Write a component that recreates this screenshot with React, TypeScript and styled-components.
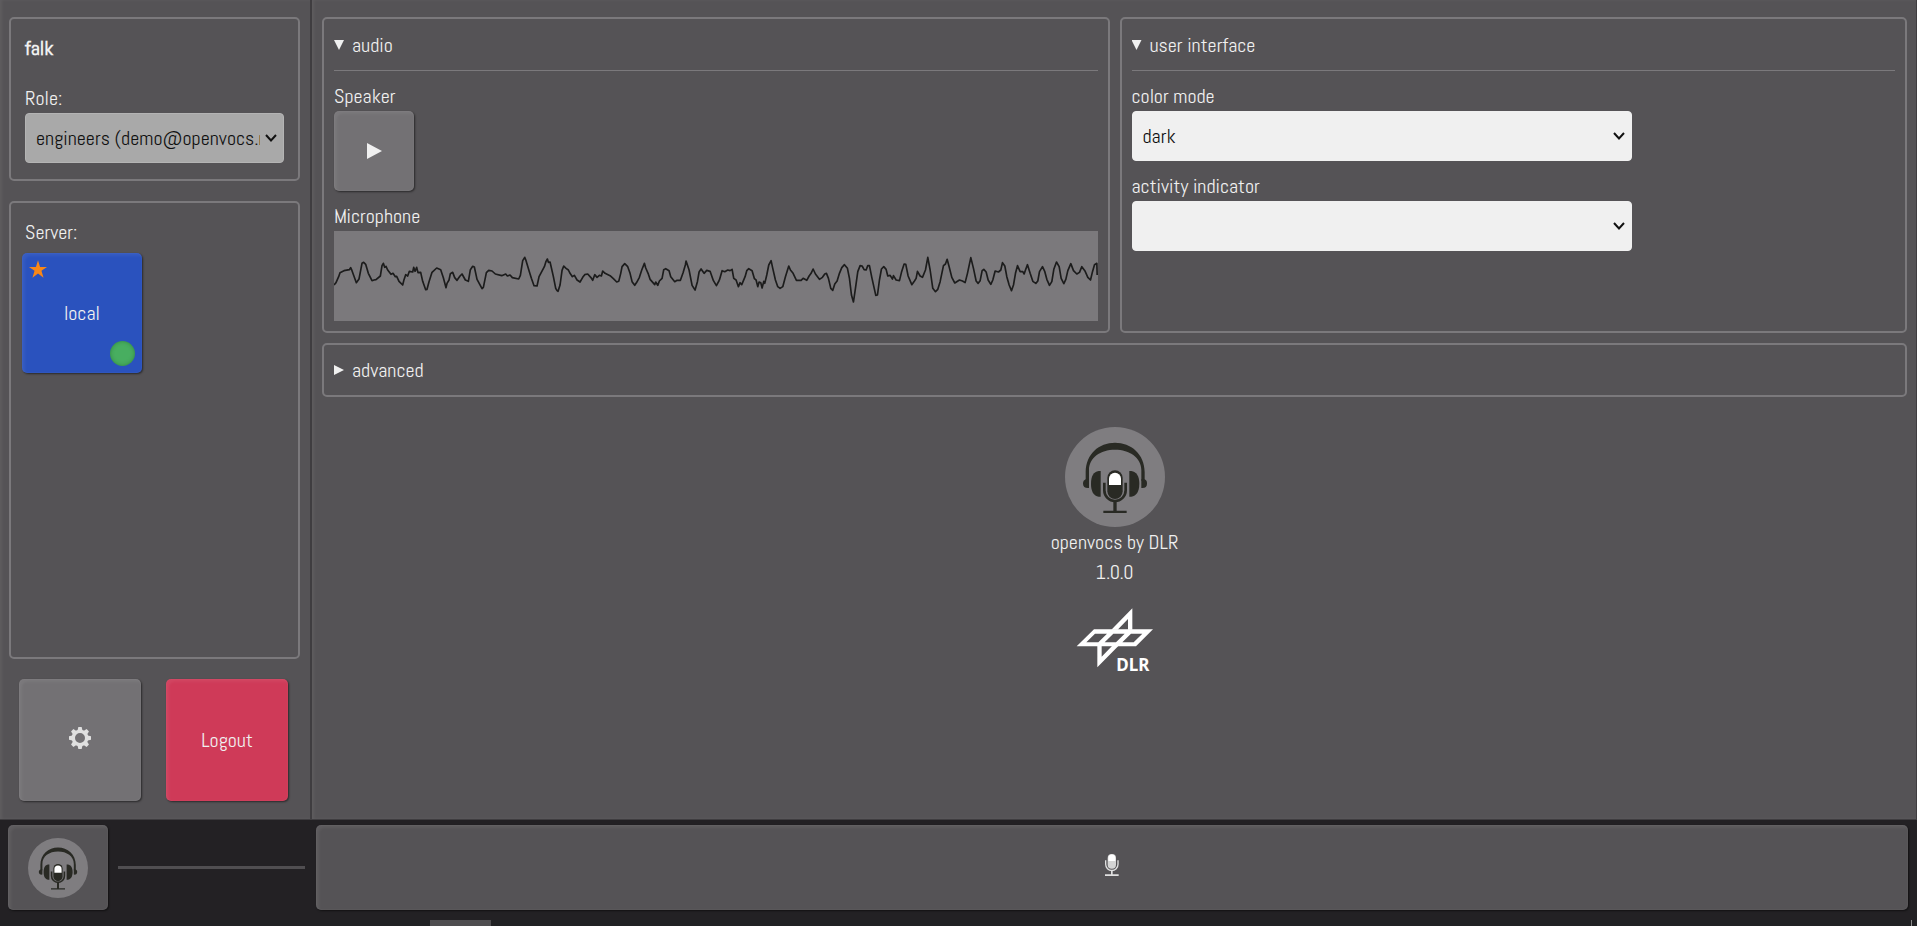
import React, { useState } from "react";
import styled, { createGlobalStyle, css } from "styled-components";

const color = {
  surface: "#555356",
  frame: "#7b797c",
  key: "#737174",
  text: "#f0f0f0",
  edge: "#3f3d40",
  bar: "#232124",
  field: "#f0f0f0",
  ink: "#1c1c1c",
  mark: "#292a24",
};

const GlobalStyle = createGlobalStyle`
  *, *::before, *::after { box-sizing: border-box; }
  body {
    margin: 0;
    background: ${color.bar};
    color: ${color.text};
    font-family: Abel, "Roboto Condensed", "Liberation Sans", sans-serif;
    font-size: 20px;
    line-height: 30px;
  }
  button, select { font: inherit; }
`;

const Page = styled.div`
  min-height: 100vh;
  display: flex;
  flex-direction: column;
`;

const Workspace = styled.div`
  flex: 1;
  display: flex;
  background: ${color.surface};
  border-bottom: 1px solid ${color.edge};
  border-right: 1px solid ${color.edge};
`;

const Sidebar = styled.aside`
  flex: 0 0 312px;
  display: flex;
  flex-direction: column;
  gap: 20px;
  padding: 17px 10px 18px 9px;
  border-right: 2px solid ${color.edge};
  box-shadow: inset 2px 0 3px rgba(255, 255, 255, 0.06);
`;

const framed = css`
  border: 2px solid ${color.frame};
  border-radius: 5px;
`;

const SidePanel = styled.section<{ $grow?: boolean }>`
  ${framed}
  padding: 14px 14px 16px;
  ${(p) => p.$grow && "flex: 1;"}
`;

const UserName = styled.h1`
  margin: 0 0 20px;
  font-size: 20px;
  line-height: 30px;
`;

const Label = styled.label`
  display: block;
`;

const Caption = styled.h2`
  margin: 0;
  font-size: 20px;
  font-weight: 400;
  line-height: 30px;
`;

const chevron =
  "url(\"data:image/svg+xml,%3Csvg xmlns='http://www.w3.org/2000/svg' width='12' height='8'%3E%3Cpath d='M1 1L6 6.5L11 1' fill='none' stroke='%23111' stroke-width='2'/%3E%3C/svg%3E\")";

const Select = styled.select<{ $muted?: boolean }>`
  appearance: none;
  display: block;
  width: 100%;
  height: 50px;
  padding: 0 23px 0 10px;
  border: 1px solid ${(p) => (p.$muted ? "#b4b4b4" : color.field)};
  border-radius: 4px;
  background: ${(p) => (p.$muted ? "#a9a9a9" : color.field)} ${chevron} no-repeat right 6px center;
  color: #111;
`;

const Key = styled.button<{ $size: number; $tone?: string }>`
  position: relative;
  display: flex;
  align-items: center;
  justify-content: center;
  width: ${(p) => p.$size}px;
  height: ${(p) => p.$size}px;
  padding: 0;
  border: 0;
  border-radius: 5px;
  background: ${(p) => p.$tone ?? color.key};
  color: ${color.text};
  box-shadow: inset 3px 3px 3px rgba(255, 255, 255, 0.06),
    inset 0 0 2px rgba(255, 255, 255, 0.1), 1px 1px 2px rgba(0, 0, 0, 0.5);
  cursor: pointer;
`;

const Glyph = styled.svg`
  display: block;
  margin-bottom: 5px;
`;

const ServerList = styled.div`
  margin: 6px -3px 0;
`;

const StarBadge = styled.svg`
  position: absolute;
  top: 7px;
  left: 7px;
`;

const StatusDot = styled.span`
  position: absolute;
  right: 7px;
  bottom: 7px;
  width: 25px;
  height: 25px;
  border-radius: 50%;
  background: #48ae60;
  box-shadow: inset 0 0 4px rgba(0, 60, 0, 0.35);
`;

const SideActions = styled.div`
  display: flex;
  justify-content: space-between;
  padding: 0 12px 0 10px;
`;

const Settings = styled.main`
  flex: 1;
  min-width: 0;
  padding: 17px 9px 17px 10px;
  box-shadow: inset 2px 0 3px rgba(255, 255, 255, 0.06);
`;

const PanelGrid = styled.div`
  display: grid;
  grid-template-columns: 1fr 1fr;
  gap: 10px;
`;

const Panel = styled.details<{ $wide?: boolean }>`
  ${framed}
  padding: 10px;
  ${(p) => p.$wide && "grid-column: 1 / -1;"}
`;

const PanelTitle = styled.summary`
  display: flex;
  align-items: center;
  gap: 8px;
  cursor: pointer;
  list-style: none;
  &::before {
    content: "";
    width: 10px;
    height: 10px;
    background: ${color.text};
    clip-path: polygon(0 0, 100% 50%, 0 100%);
  }
  details[open] > & {
    padding: 1px 0 10px;
    margin-bottom: 10px;
    border-bottom: 1px solid ${color.frame};
  }
  details[open] > &::before {
    clip-path: polygon(0 0, 100% 0, 50% 100%);
  }
`;

const Fields = styled.div`
  display: flex;
  flex-direction: column;
  gap: 10px;
`;

const NarrowFields = styled(Fields)`
  width: 500px;
  max-width: 100%;
`;

const Meter = styled.svg`
  display: block;
  width: 100%;
  height: 90px;
  background: ${color.frame};
`;

const About = styled.section`
  display: flex;
  flex-direction: column;
  align-items: center;
  padding-top: 30px;
`;

const AboutLine = styled.p`
  margin: 0;
`;

const AgencyLink = styled.a`
  display: block;
  height: 68px;
  margin-top: 21px;
`;

const Footer = styled.footer`
  display: flex;
  align-items: center;
  padding: 5px 9px 10px 8px;
`;

const BarKey = styled(Key)<{ $fill?: boolean }>`
  height: 85px;
  background: ${color.surface};
  ${(p) => (p.$fill ? "flex: 1; width: auto;" : "flex: none;")}
`;

const VolumeLine = styled.div`
  width: 187px;
  height: 3px;
  margin: 0 11px 0 10px;
  background: #504e51;
`;

const ScrollStrip = styled.div`
  display: flex;
  height: 6px;
  padding: 0 5px 0 430px;
  justify-content: space-between;
  background: #202123;
`;

const ScrollThumb = styled.div`
  width: 61px;
  background: #4e4d4f;
`;

const ScrollEnd = styled.div`
  width: 1px;
  background: #8a8a8a;
`;

const waveStart =
  "42,195 48,188 56,170 60,158 72,152 88,149 92,143 96,152 109,188 117,177 126,130 131,127 137,133 145,160 156,182 162,180 168,179 181,168 186,137 190,130 194,142 198,139 203,150 213,163 219,160 226,170 230,169 237,184 248,195 252,179 257,164 263,168 268,154 278,156 281,142 285,154 290,142 294,158 302,157 308,184 317,209 321,208 327,185 336,157 350,144 362,149 370,173 378,203 381,190 387,180 391,161 398,157 404,173 411,181 420,168 426,162 436,180 445,184 451,149 458,139 463,141 471,178 486,206 490,202 499,158 506,151 516,153 526,162 545,167 557,162 562,168 570,165 577,173 596,177 601,166 608,122 614,112 618,122 627,152 634,175 642,197 651,198 657,170 665,155 673,140 678,124 682,117 685,127 690,126 700,170 707,205 711,212 714,214 720,195 726,151 731,138 738,145 745,150 750,160 757,170 763,166 771,180 780,186 788,172 794,164 803,162 812,172 818,181 824,164 831,172 838,166 844,168 848,153 855,160 870,167 880,176 890,186 896,184 902,160 906,140 914,131 923,140 930,160 936,185 944,196 950,187 958,172 965,150 973,130 977,144 984,160 990,178 1004,194 1007,186 1013,196 1018,183 1026,175 1031,149 1037,146 1047,152 1052,170 1064,185 1071,181 1081,181 1089,158 1096,134 1098,123 1107,150 1116,196 1125,210 1132,185 1137,156 1143,147 1152,160 1160,151 1170,154 1180,182 1189,197 1198,180";

const waveEnd =
  "58,180 66,152 74,155 83,150 90,152 96,148 101,175 108,180 115,200 120,188 125,194 135,170 140,152 146,146 156,152 163,176 168,180 173,200 177,186 182,188 186,204 191,184 194,190 200,165 206,135 213,122 218,145 226,180 233,200 240,205 248,200 256,170 266,138 271,150 279,160 289,181 303,181 309,175 320,181 327,168 333,160 339,147 346,162 358,178 367,172 374,162 379,160 385,175 392,205 398,211 404,192 411,183 418,160 425,143 433,134 442,145 448,175 454,225 460,246 466,205 473,155 480,137 486,138 492,149 498,150 503,137 508,137 515,172 527,226 532,225 538,180 544,147 551,140 558,148 563,168 570,166 577,177 580,167 588,180 598,182 604,157 612,132 617,133 624,168 635,194 643,183 648,175 652,154 660,168 667,172 676,150 683,112 690,150 698,205 706,215 713,208 720,185 730,137 736,132 741,118 747,140 755,172 764,189 778,180 787,183 795,188 802,160 812,113 820,145 828,183 834,190 840,182 846,152 851,148 858,156 864,180 872,193 878,180 885,153 895,156 902,150 907,128 914,138 920,170 927,195 934,212 940,195 946,160 952,137 960,155 968,155 972,162 976,150 982,134 990,160 998,184 1007,190 1013,183 1018,155 1027,140 1034,155 1040,178 1048,196 1055,185 1061,148 1069,126 1077,140 1083,175 1091,191 1097,178 1103,152 1112,131 1120,152 1130,162 1138,157 1145,140 1155,154 1163,172 1171,180 1177,155 1183,134 1190,130 1191,165";

function Waveform() {
  return (
    <Meter viewBox="0 0 2290 270" preserveAspectRatio="none" role="img" aria-label="Microphone level">
      <g fill="none" stroke={color.ink} strokeWidth={5} strokeLinejoin="round">
        <polyline transform="translate(-42 -33)" points={waveStart} />
        <polyline transform="translate(1098 -33)" points={waveEnd} />
      </g>
    </Meter>
  );
}

function HeadsetLogo({ size }: { size: number }) {
  return (
    <svg width={size} height={size} viewBox="102 51 300 300" aria-hidden="true">
      <circle cx="252" cy="201" r="150" fill="#7f7d80" />
      <g fill={color.mark}>
        <path d="M164 212V186C164 132 204 98 252 98S341 132 341 186V212H331V180C331 143 296 119 252 119S174 143 174 180V212Z" />
        <path d="M164 208H174V234C162 235 156 230 156 221C156 214 159 210 164 208Z" />
        <path d="M341 208H331V234C343 235 348 230 348 221C348 214 346 210 341 208Z" />
        <path d="M209 183V260H203C188 258 180 244 180 221S188 185 203 183Z" />
        <path d="M295 183V260H301C316 258 325 244 325 221S316 185 301 183Z" />
      </g>
      <rect x="226" y="178" width="52" height="92" rx="26" fill="#7f7d80" />
      <path d="M220 218V241A32 32 0 0 0 284 241V218" fill="none" stroke="#7f7d80" strokeWidth="16" />
      <path d="M220 218V241A32 32 0 0 0 284 241V218" fill="none" stroke={color.mark} strokeWidth="8" />
      <rect x="229" y="181" width="46" height="86" rx="23" fill={color.mark} />
      <path d="M234 225V206A18 18 0 0 1 270 206V225Z" fill="#fff" />
      <path d="M247 275H257V302H287V309H217V302H247Z" fill={color.mark} />
    </svg>
  );
}

function AgencyLogo() {
  return (
    <svg width="78" height="68" viewBox="136 596 234 204" aria-label="DLR" role="img">
      <g fill="#fff" fillRule="evenodd">
        <path d="M138 711L190 660H367L316 711ZM167 699H203L229 673H193ZM222 699H256L282 673H248ZM275 699H309L335 673H301Z" />
        <path d="M305 597V661H242ZM292 629L261 661H292Z" />
        <path d="M200 774V710H263ZM213 742L244 710H213Z" />
      </g>
      <text x="257" y="786" fill="#fff" fontFamily="'Noto Sans', sans-serif" fontWeight="700" fontSize="51">
        DLR
      </text>
    </svg>
  );
}

function GearIcon() {
  return (
    <Glyph width="22" height="22" viewBox="-33 -33 66 66" aria-hidden="true">
      <g fill="#e0e0e0">
        {[0, 45, 90, 135, 180, 225, 270, 315].map((a) => (
          <path key={a} d="M-8 -20L-5 -33H5L8 -20Z" transform={`rotate(${a})`} />
        ))}
      </g>
      <circle r="20" fill="none" stroke="#e0e0e0" strokeWidth="10" />
    </Glyph>
  );
}

function MicIcon() {
  return (
    <Glyph width="14" height="22" viewBox="0 0 42 66" aria-hidden="true">
      <rect x="8" y="0" width="25" height="44" rx="12" fill="#d4d4d4" />
      <path d="M10 21V12A10 10 0 0 1 31 12V21Z" fill="#fff" />
      <path d="M2 19V31A18 18 0 0 0 39 31V19" fill="none" stroke="#e0e0e0" strokeWidth="4" />
      <path d="M18 49H23V61H41V66H0V61H18Z" fill="#e0e0e0" />
    </Glyph>
  );
}

export default function App() {
  const [mode, setMode] = useState("dark");
  return (
    <>
      <GlobalStyle />
      <Page>
        <Workspace>
          <Sidebar>
            <SidePanel>
              <UserName>falk</UserName>
              <Label htmlFor="role">Role:</Label>
              <Select id="role" $muted>
                <option>engineers (demo@openvocs.net)</option>
              </Select>
            </SidePanel>
            <SidePanel $grow>
              <Caption>Server:</Caption>
              <ServerList>
                <Key type="button" $size={120} $tone="#2a52be">
                  <StarBadge width="18" height="18" viewBox="0 0 52 50" aria-hidden="true">
                    <path d="M26 0L32 19H52L36 30L42 50L26 38L10 50L16 30L0 19H20Z" fill="#fa8716" />
                  </StarBadge>
                  local
                  <StatusDot />
                </Key>
              </ServerList>
            </SidePanel>
            <SideActions>
              <Key type="button" $size={122} aria-label="Settings">
                <GearIcon />
              </Key>
              <Key type="button" $size={122} $tone="#cf3a58">
                Logout
              </Key>
            </SideActions>
          </Sidebar>
          <Settings>
            <PanelGrid>
              <Panel open>
                <PanelTitle>audio</PanelTitle>
                <Fields>
                  <div>
                    <Caption>Speaker</Caption>
                    <Key type="button" $size={80} aria-label="Play test sound">
                      <svg width="15" height="16" viewBox="0 0 15 16" aria-hidden="true">
                        <path d="M0 0L15 8L0 16Z" fill={color.text} />
                      </svg>
                    </Key>
                  </div>
                  <div>
                    <Caption>Microphone</Caption>
                    <Waveform />
                  </div>
                </Fields>
              </Panel>
              <Panel open>
                <PanelTitle>user interface</PanelTitle>
                <NarrowFields>
                  <div>
                    <Label htmlFor="mode">color mode</Label>
                    <Select id="mode" value={mode} onChange={(e) => setMode(e.target.value)}>
                      <option>dark</option>
                      <option>light</option>
                    </Select>
                  </div>
                  <div>
                    <Label htmlFor="activity">activity indicator</Label>
                    <Select id="activity">
                      <option></option>
                    </Select>
                  </div>
                </NarrowFields>
              </Panel>
              <Panel $wide>
                <PanelTitle>advanced</PanelTitle>
              </Panel>
            </PanelGrid>
            <About>
              <HeadsetLogo size={100} />
              <AboutLine>openvocs by DLR</AboutLine>
              <AboutLine>1.0.0</AboutLine>
              <AgencyLink href="#dlr">
                <AgencyLogo />
              </AgencyLink>
            </About>
          </Settings>
        </Workspace>
        <Footer>
          <BarKey type="button" $size={100} aria-label="Menu">
            <HeadsetLogo size={60} />
          </BarKey>
          <VolumeLine />
          <BarKey type="button" $size={100} $fill aria-label="Push to talk">
            <MicIcon />
          </BarKey>
        </Footer>
        <ScrollStrip>
          <ScrollThumb />
          <ScrollEnd />
        </ScrollStrip>
      </Page>
    </>
  );
}
